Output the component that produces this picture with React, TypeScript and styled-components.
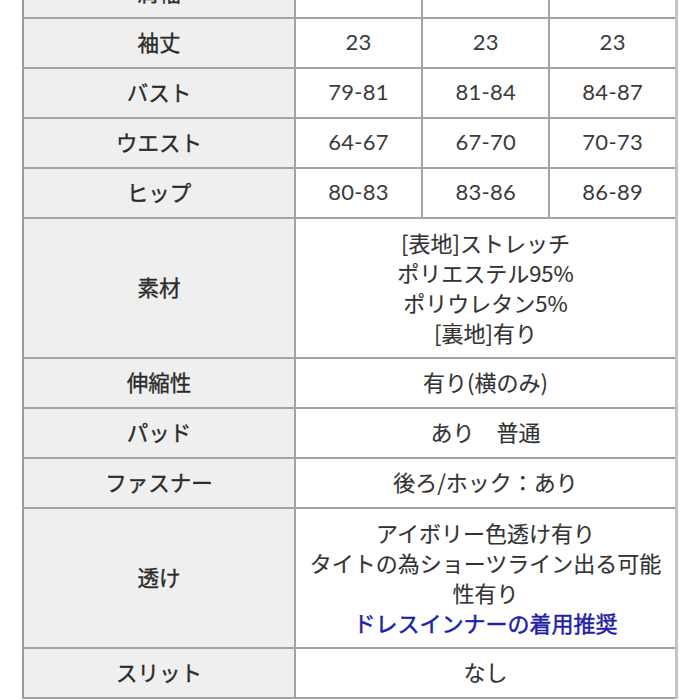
import React from "react";
import styled, { createGlobalStyle } from "styled-components";

const Global = createGlobalStyle`
  html, body { margin: 0; padding: 0; background: #ffffff; }
  body { font-family: "Noto Sans CJK JP", "Noto Sans", sans-serif; color: #333333; }
`;

const Page = styled.div`
  width: 700px;
  height: 700px;
  overflow: hidden;
  padding-left: 22px;
  box-sizing: border-box;
`;

const Table = styled.table`
  margin-top: -33px;
  border-collapse: collapse;
  width: 656px;
  table-layout: fixed;
`;

const HeadCell = styled.th`
  width: 270px;
  background: #efefef;
  border: 2px solid #a3a3a3;
  border-left-color: #9a9a9a;
  font-family: "Noto Sans CJK JP", sans-serif;
  font-weight: 400;
  -webkit-text-stroke: 0.35px #2b2b2b;
  font-size: 21.5px;
  color: #2b2b2b;
  text-align: center;
  height: 45px;
  padding: 0 0 3px;
`;

const Cell = styled.td<{ $multi?: boolean }>`
  border: 2px solid #a3a3a3;
  &:last-child { border-right: 3px solid #c4c4c4; }
  font-family: "Lato", "Noto Sans CJK JP", sans-serif;
  font-size: 22px;
  letter-spacing: 0.3px;
  color: #3a3a3a;
  text-align: center;
  height: ${(p) => (p.$multi ? "136px" : "46px")};
  padding: 0 0 2px;
  line-height: 30px;
  white-space: nowrap;
`;

const Line = styled.div<{ $blue?: boolean }>`
  font-family: "Noto Sans CJK JP", sans-serif;
  font-size: 22px;
  letter-spacing: 0;
  line-height: 30px;
  font-weight: 400;
  -webkit-text-stroke: ${(p) => (p.$blue ? "0.5px #1f22a8" : "0.15px #333333")};
  color: ${(p) => (p.$blue ? "#1f22a8" : "#333333")};
`;

const Single = styled.span`
  font-family: "Noto Sans CJK JP", sans-serif;
  letter-spacing: 0;
  -webkit-text-stroke: 0.15px #333333;
  color: #333333;
`;

const sizeRows: [string, string[]][] = [
  ["肩幅", ["34", "35", "36"]],
  ["袖丈", ["23", "23", "23"]],
  ["バスト", ["79-81", "81-84", "84-87"]],
  ["ウエスト", ["64-67", "67-70", "70-73"]],
  ["ヒップ", ["80-83", "83-86", "86-89"]],
];

export default function App() {
  return (
    <>
      <Global />
      <Page>
        <Table>
          <tbody>
            {sizeRows.map(([label, vals]) => (
              <tr key={label}>
                <HeadCell>{label}</HeadCell>
                {vals.map((v, i) => (
                  <Cell key={i}>{v}</Cell>
                ))}
              </tr>
            ))}
            <tr>
              <HeadCell>素材</HeadCell>
              <Cell colSpan={3} $multi>
                <Line>[表地]ストレッチ</Line>
                <Line>ポリエステル95%</Line>
                <Line>ポリウレタン5%</Line>
                <Line>[裏地]有り</Line>
              </Cell>
            </tr>
            <tr>
              <HeadCell>伸縮性</HeadCell>
              <Cell colSpan={3}>
                <Single>有り(横のみ)</Single>
              </Cell>
            </tr>
            <tr>
              <HeadCell>パッド</HeadCell>
              <Cell colSpan={3}>
                <Single>あり　普通</Single>
              </Cell>
            </tr>
            <tr>
              <HeadCell>ファスナー</HeadCell>
              <Cell colSpan={3}>
                <Single>後ろ/ホック：あり</Single>
              </Cell>
            </tr>
            <tr>
              <HeadCell>透け</HeadCell>
              <Cell colSpan={3} $multi>
                <Line>アイボリー色透け有り</Line>
                <Line>タイトの為ショーツライン出る可能</Line>
                <Line>性有り</Line>
                <Line $blue>ドレスインナーの着用推奨</Line>
              </Cell>
            </tr>
            <tr>
              <HeadCell>スリット</HeadCell>
              <Cell colSpan={3}>
                <Single>なし</Single>
              </Cell>
            </tr>
          </tbody>
        </Table>
      </Page>
    </>
  );
}
